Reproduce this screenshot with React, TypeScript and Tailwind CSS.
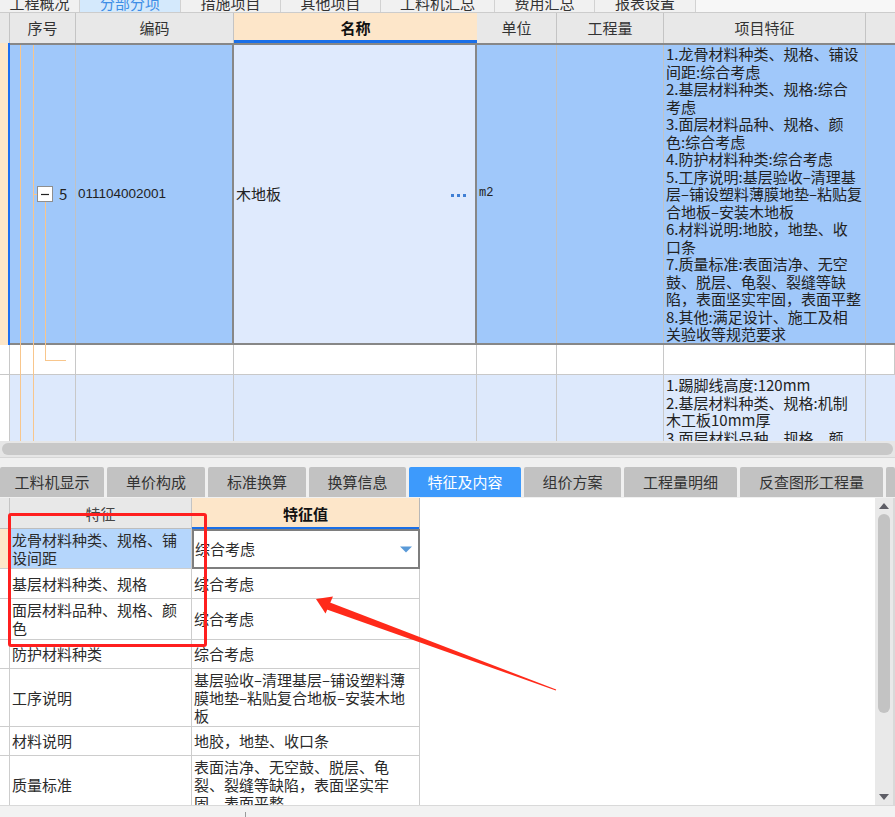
import React from 'react';

const topTabs = [
  { label: '工程概况', w: 'w-[80px]', active: false },
  { label: '分部分项', w: 'w-[101px]', active: true },
  { label: '措施项目', w: 'w-[100px]', active: false },
  { label: '其他项目', w: 'w-[100px]', active: false },
  { label: '工料机汇总', w: 'w-[114px]', active: false },
  { label: '费用汇总', w: 'w-[100px]', active: false },
  { label: '报表设置', w: 'w-[101px]', active: false },
];

const bottomTabs = [
  { label: '工料机显示', w: 'w-[104px]', active: false },
  { label: '单价构成', w: 'w-[98px]', active: false },
  { label: '标准换算', w: 'w-[98px]', active: false },
  { label: '换算信息', w: 'w-[97px]', active: false },
  { label: '特征及内容', w: 'w-[112px]', active: true },
  { label: '组价方案', w: 'w-[97px]', active: false },
  { label: '工程量明细', w: 'w-[113px]', active: false },
  { label: '反查图形工程量', w: 'w-[143px]', active: false },
];

// 项目特征 – 按截图的换行逐行写出
const featureLines = [
  '1.龙骨材料种类、规格、铺设',
  '间距:综合考虑',
  '2.基层材料种类、规格:综合',
  '考虑',
  '3.面层材料品种、规格、颜',
  '色:综合考虑',
  '4.防护材料种类:综合考虑',
  '5.工序说明:基层验收–清理基',
  '层–铺设塑料薄膜地垫–粘贴复',
  '合地板–安装木地板',
  '6.材料说明:地胶，地垫、收',
  '口条',
  '7.质量标准:表面洁净、无空',
  '鼓、脱层、龟裂、裂缝等缺',
  '陷，表面坚实牢固，表面平整',
  '8.其他:满足设计、施工及相',
  '关验收等规范要求',
];

const nextLines = ['1.踢脚线高度:120mm', '2.基层材料种类、规格:机制', '木工板10mm厚', '3.面层材料品种、规格、颜'];

const featRows = [
  { h: 'h-[30px]', name: ['基层材料种类、规格'], value: ['综合考虑'] },
  { h: 'h-[41px]', name: ['面层材料品种、规格、颜', '色'], value: ['综合考虑'] },
  { h: 'h-[29px]', name: ['防护材料种类'], value: ['综合考虑'] },
  {
    h: 'h-[58px]',
    name: ['工序说明'],
    value: ['基层验收–清理基层–铺设塑料薄', '膜地垫–粘贴复合地板–安装木地', '板'],
  },
  { h: 'h-[29px]', name: ['材料说明'], value: ['地胶，地垫、收口条'] },
  {
    h: 'h-[58px]',
    name: ['质量标准'],
    value: ['表面洁净、无空鼓、脱层、龟', '裂、裂缝等缺陷，表面坚实牢', '固，表面平整'],
  },
];

const COLS = 'grid grid-cols-[66px_158px_243px_80px_107px_202px_29px] flex-1';

function Lines({ lines }: { lines: string[] }) {
  return (
    <div>
      {lines.map((l, i) => (
        <div key={i} className="whitespace-nowrap">
          {l}
        </div>
      ))}
    </div>
  );
}

function TopGrid() {
  return (
    <div className="h-[428px] flex flex-col overflow-hidden">
      {/* 表头 */}
      <div className="flex h-[30px] shrink-0 bg-[#e8e8e8] text-[#333]">
        <div className="w-[10px] border-r border-[#c4c4c4]" />
        <div className={COLS}>
          <div className="flex items-center justify-center border-r border-[#c4c4c4]">序号</div>
          <div className="flex items-center justify-center border-r border-[#c4c4c4]">编码</div>
          <div className="flex items-center justify-center bg-[#fde6c9] font-bold text-[#111] shadow-[inset_0_-3px_0_#1a6fe8]">
            名称
          </div>
          <div className="flex items-center justify-center border-r border-[#c4c4c4]">单位</div>
          <div className="flex items-center justify-center border-r border-[#c4c4c4]">工程量</div>
          <div className="flex items-center justify-center border-r border-[#c4c4c4]">项目特征</div>
          <div />
        </div>
      </div>

      {/* 第 5 行（选中） */}
      <div className="flex h-[302px] shrink-0">
        <div className="w-[10px] bg-[#fde6c8] shadow-[inset_-2px_0_0_#1c6ef2]" />
        <div className={`${COLS} border-y-2 border-[#878787] bg-[#a0c8fa]`}>
          <div className="flex items-center pl-[49px] border-r border-[#c2c2c2]">5</div>
          <div className="flex items-center pl-[2px] border-r-2 border-[#878787] font-['Liberation_Sans',sans-serif] text-[13.5px]">
            011104002001
          </div>
          <div className="flex items-center justify-between pl-[2px] pr-[9px] bg-[#dfeafd] border-r-2 border-[#878787]">
            <span>木地板</span>
            <span className="flex gap-[3px] pt-[2px]">
              <span className="w-[3px] h-[3px] bg-[#3f7fd4]" />
              <span className="w-[3px] h-[3px] bg-[#3f7fd4]" />
              <span className="w-[3px] h-[3px] bg-[#3f7fd4]" />
            </span>
          </div>
          <div className="flex items-center pl-[2px] border-r border-[#c2c2c2] font-['Liberation_Mono',monospace] text-[12px]">
            m2
          </div>
          <div className="border-r border-[#c2c2c2]" />
          <div className="pl-[2px] border-r border-[#c2c2c2]">
            <Lines lines={featureLines} />
          </div>
          <div />
        </div>
      </div>

      {/* 空行 */}
      <div className="flex h-[30px] shrink-0 bg-white">
        <div className="w-[10px] border-r border-b border-[#c8c8c8]" />
        <div className={COLS}>
          {[0, 1, 2, 3, 4, 5, 6].map((i) => (
            <div key={i} className="border-r border-b border-[#c8c8c8]" />
          ))}
        </div>
      </div>

      {/* 下一项 */}
      <div className="flex flex-1">
        <div className="w-[10px] bg-white border-r border-[#c8c8c8]" />
        <div className={`${COLS} bg-[#dde9fc]`}>
          <div className="border-r border-[#c8c8c8]" />
          <div className="border-r border-[#c8c8c8]" />
          <div className="border-r border-[#c8c8c8]" />
          <div className="border-r border-[#c8c8c8]" />
          <div className="border-r border-[#c8c8c8]" />
          <div className="pl-[2px] pt-[1px] border-r border-[#c8c8c8]">
            <Lines lines={nextLines} />
          </div>
          <div />
        </div>
      </div>
    </div>
  );
}

function BottomGrid() {
  return (
    <div className="flex h-[307px]">
      <div className="w-[420px] flex flex-col overflow-hidden text-[#2b2b2b] leading-[18px]">
        <div className="flex h-[31px] shrink-0">
          <div className="w-[10px] bg-[#e8e8e8] border-r border-[#c4c4c4] shadow-[inset_0_-1px_0_#bdbdbd]" />
          <div className="w-[182px] flex items-center justify-center bg-[#e8e8e8] text-[#444] border-r border-[#c4c4c4] shadow-[inset_0_-1px_0_#bdbdbd]">
            特征
          </div>
          <div className="w-[228px] flex items-center justify-center bg-[#fde6c9] font-bold text-[#111] border-r border-[#b8b8b8] shadow-[inset_0_-2px_0_#1a6fe8]">
            特征值
          </div>
        </div>

        <div className="flex h-[40px] shrink-0">
          <div className="w-[10px] bg-[#fde6c8] border-r border-b border-[#cdcdcd]" />
          <div className="w-[182px] flex items-center pl-[2px] bg-[#b5d6fc] border-r border-b border-[#cdcdcd]">
            <Lines lines={['龙骨材料种类、规格、铺', '设间距']} />
          </div>
          <div className="w-[228px] flex items-center justify-between pl-[1px] pr-[6px] bg-white border-2 border-[#7e7e7e]">
            <span>综合考虑</span>
            <svg width="12" height="7" viewBox="0 0 12 7">
              <path d="M0 0.5 L12 0.5 L6 6.5 Z" fill="#5a9ad8" />
            </svg>
          </div>
        </div>

        {featRows.map((r, i) => (
          <div key={i} className={`flex ${r.h} shrink-0`}>
            <div className="w-[10px] bg-white border-r border-b border-[#cdcdcd]" />
            <div className="w-[182px] flex items-center pl-[2px] border-r border-b border-[#cdcdcd]">
              <Lines lines={r.name} />
            </div>
            <div className="w-[228px] flex items-center pl-[2px] border-r border-b border-[#cdcdcd]">
              <Lines lines={r.value} />
            </div>
          </div>
        ))}
      </div>

      <div className="w-[455px] bg-white" />

      {/* 竖向滚动条 */}
      <div className="w-[18px] flex flex-col items-center bg-[#e9e9e9]">
        <div className="h-[16px] flex items-center justify-center">
          <svg width="10" height="6" viewBox="0 0 10 6">
            <path d="M0 6 L10 6 L5 0 Z" fill="#5e5e66" />
          </svg>
        </div>
        <div className="flex-1 w-full flex justify-center">
          <div className="w-[12px] h-[199px] rounded-full bg-[#c3c3c3]" />
        </div>
        <div className="h-[16px] flex items-center justify-center">
          <svg width="10" height="6" viewBox="0 0 10 6">
            <path d="M0 0 L10 0 L5 6 Z" fill="#5e5e66" />
          </svg>
        </div>
      </div>
      <div className="w-[2px] bg-[#d9d9d9]" />
    </div>
  );
}

export default function App() {
  return (
    <div className="relative w-[895px] h-[817px] overflow-hidden bg-white text-[15px] leading-[17.5px] text-[#222] font-['Noto_Sans_CJK_SC',sans-serif]">
      {/* 顶部页签（上半截被裁掉） */}
      <div className="flex h-[13px] overflow-hidden bg-[#f7f7f7] border-b border-[#cccccc]">
        {topTabs.map((t) => (
          <div
            key={t.label}
            className={`${t.w} shrink-0 flex justify-center border-r border-[#d2d2d2] ${
              t.active ? 'bg-[#d4e9fc] text-[#3e8ee6]' : 'bg-[#f1f1f1] text-[#333]'
            }`}
          >
            <span className="-mt-[6px] whitespace-nowrap">{t.label}</span>
          </div>
        ))}
      </div>

      <TopGrid />

      {/* 横向滚动条 */}
      <div className="h-[16px] bg-[#e6e6e6] flex items-center px-[2px]">
        <div className="h-[12px] flex-1 rounded-full bg-[#c8c8c8]" />
      </div>
      <div className="h-[10px] bg-[#f0f0f0] border-t border-[#d6d6d6]" />

      {/* 下方页签 */}
      <div className="flex gap-[3px] h-[31px] bg-[#f0f0f0] pb-[1px]">
        {bottomTabs.map((t) => (
          <div
            key={t.label}
            className={`${t.w} shrink-0 flex items-center justify-center rounded-t-[2px] whitespace-nowrap ${
              t.active ? 'bg-[#3d9afc] text-white' : 'bg-[#c2c2c2] text-[#333]'
            }`}
          >
            {t.label}
          </div>
        ))}
        <div className="flex-1 bg-[#c2c2c2] rounded-t-[2px]" />
      </div>

      <BottomGrid />

      {/* 状态栏 */}
      <div className="relative h-[12px] bg-[#f2f2f2] border-t border-[#d9d9d9]">
        <div className="absolute left-[245px] top-[6px] w-px h-[6px] bg-[#9a9a9a]" />
      </div>

      {/* 树形连线 */}
      <svg className="absolute left-0 top-0 pointer-events-none" width="895" height="441">
        <g stroke="#f8c68c" strokeWidth="1">
          <line x1="20.5" y1="45" x2="20.5" y2="441" />
          <line x1="33.5" y1="45" x2="33.5" y2="441" />
          <line x1="33" y1="194.5" x2="38" y2="194.5" />
          <line x1="45.5" y1="202" x2="45.5" y2="360.5" />
          <line x1="45" y1="360.5" x2="66" y2="360.5" />
        </g>
        <rect x="37.5" y="186.5" width="15" height="15" fill="#ffffff" stroke="#8e8e8e" />
        <line x1="41" y1="194.5" x2="49" y2="194.5" stroke="#222" strokeWidth="1.2" />
      </svg>

      {/* 标注：红框与箭头 */}
      <div className="absolute left-[8px] top-[513px] w-[199px] h-[134px] border-[3.5px] border-[#ff1f1f] rounded-[3px] pointer-events-none" />
      <svg className="absolute left-0 top-0 pointer-events-none" width="895" height="817">
        <polygon points="316,599 333,596.5 325.5,613.5" fill="#ff2a1a" />
        <polygon points="328,601.8 556.2,689.6 555.8,690.4 325.4,609" fill="#ff2a1a" />
      </svg>
    </div>
  );
}
